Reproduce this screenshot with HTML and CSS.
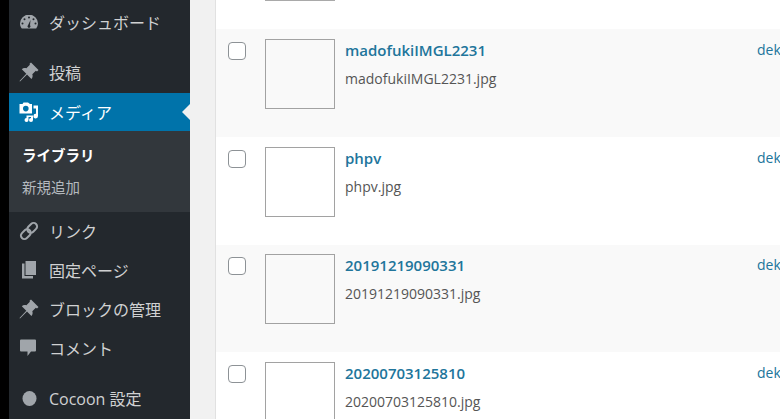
FILE: index.html
```html
<!DOCTYPE html>
<html lang="ja">
<head>
  <meta charset="UTF-8">
  <title>メディアライブラリ</title>
  <link rel="stylesheet" href="styles.css">
</head>
<body>
  <div class="pagina">
    <nav class="menu">
      <a class="item primeiro">
        <svg class="icone" viewBox="0 0 20 20"><path fill-rule="evenodd" d="M10 2.500a9 9 0 0 0-9 9c0 2 .7 3.700 1.800 5h14.400a8.900 8.900 0 0 0 1.800-5 9 9 0 0 0-9-9zM10 4.500a1 1 0 1 1 0 2 1 1 0 0 1 0-2zM5.500 6.200a1 1 0 1 1 0 2 1 1 0 0 1 0-2zM14.500 6.200a1 1 0 1 1 0 2 1 1 0 0 1 0-2zM3.500 10.500a1 1 0 1 1 0 2 1 1 0 0 1 0-2zM16.500 10.500a1 1 0 1 1 0 2 1 1 0 0 1 0-2zM11.500 8l-.5 5.200a1.500 1.500 0 1 1-2 0z"/></svg>
        ダッシュボード
      </a>
      <a class="item depois-separador">
        <svg class="icone" viewBox="0 0 20 20"><path d="M12 .5l7.500 7.500-1.500 1.500-1.200-.7-3.500 3.500c.7 1.800.3 3.400-.9 4.600L8 12.500 1 19.500l-.5-.5L7.300 11.700 2.800 7.200C4 6 5.600 5.600 7.400 6.300l3.500-3.500-.4-1z"/></svg>
        投稿
      </a>
      <a class="item ativo">
        <svg class="icone" viewBox="0 0 20 20"><path fill-rule="evenodd" d="M.5 2h3l1-1.500h4.500L11 2h2v9.500H.5zM6.800 3.800a2.800 2.800 0 1 0 0 5.600 2.800 2.800 0 0 0 0-5.600z"/><path d="M14.500 3.500h4.500v10.500a2.300 2.300 0 1 1-2-2.200V6.500h-2.500zM7.500 13.500H14v4.500a2 2 0 1 1-2-2v-1H9.500v3a2 2 0 1 1-2-2z"/></svg>
        メディア
      </a>
      <div class="submenu">
        <a class="subitem atual">ライブラリ</a>
        <a class="subitem">新規追加</a>
      </div>
      <a class="item">
        <svg class="icone" viewBox="0 0 20 20"><g class="traco" transform="rotate(-45 10 10)"><rect x="0" y="6.500" width="11" height="7" rx="3.500"/><rect x="9" y="6.500" width="11" height="7" rx="3.500"/></g></svg>
        リンク
      </a>
      <a class="item">
        <svg class="icone" viewBox="0 0 20 20"><path d="M6.500 1H17v14H6.500z"/><path d="M3 3.500h2.500V16H14v2.500H3z"/></svg>
        固定ページ
      </a>
      <a class="item">
        <svg class="icone" viewBox="0 0 20 20"><path d="M12 .5l7.500 7.500-1.500 1.500-1.200-.7-3.500 3.500c.7 1.800.3 3.400-.9 4.600L8 12.500 1 19.500l-.5-.5L7.300 11.700 2.800 7.200C4 6 5.600 5.600 7.400 6.300l3.500-3.500-.4-1z"/></svg>
        ブロックの管理
      </a>
      <a class="item">
        <svg class="icone" viewBox="0 0 20 20"><path d="M2 1.500h14a1 1 0 0 1 1 1v10a1 1 0 0 1-1 1h-4l-3.500 4.500v-4.500H2a1 1 0 0 1-1-1v-10a1 1 0 0 1 1-1z"/></svg>
        コメント
      </a>
      <a class="item depois-separador">
        <svg class="icone" viewBox="0 0 20 20"><ellipse cx="10.500" cy="10.500" rx="7" ry="7.500"/></svg>
        Cocoon 設定
      </a>
    </nav>

    <main class="lista">
      <div class="linha-topo"><div class="miniatura-topo"></div></div>

      <div class="linha alt">
        <span class="caixa"></span>
        <div class="miniatura"></div>
        <div class="info">
          <a class="titulo">madofukiIMGL2231</a>
          <p class="arquivo">madofukiIMGL2231.jpg</p>
        </div>
        <a class="autor">dek</a>
      </div>
      <div class="linha">
        <span class="caixa"></span>
        <div class="miniatura"></div>
        <div class="info">
          <a class="titulo">phpv</a>
          <p class="arquivo">phpv.jpg</p>
        </div>
        <a class="autor">dek</a>
      </div>
      <div class="linha alt">
        <span class="caixa"></span>
        <div class="miniatura"></div>
        <div class="info">
          <a class="titulo">20191219090331</a>
          <p class="arquivo">20191219090331.jpg</p>
        </div>
        <a class="autor">dek</a>
      </div>
      <div class="linha">
        <span class="caixa"></span>
        <div class="miniatura"></div>
        <div class="info">
          <a class="titulo">20200703125810</a>
          <p class="arquivo">20200703125810.jpg</p>
        </div>
        <a class="autor">dek</a>
      </div>
    </main>
  </div>
</body>
</html>
```

FILE: styles.css
```css
html, body { margin: 0; padding: 0; height: 419px; overflow: hidden; background: #f1f1f1; }
body { font-family: "Open Sans", "Noto Sans CJK JP", sans-serif; }
.pagina { display: flex; height: 419px; overflow: hidden; }

.menu { width: 190px; flex: none; background: #23282d; border-left: 9px solid #000; display: flex; flex-direction: column; padding-top: 3px; box-sizing: border-box; }
.item { position: relative; height: 39px; flex: none; display: flex; align-items: center; padding-left: 10px; padding-bottom: 2px; box-sizing: border-box; gap: 10px; font-size: 16px; color: #d0d1d2; white-space: nowrap; }
.depois-separador { margin-top: 11px; }
.icone { width: 20px; height: 20px; fill: #a0a5aa; flex: none; }
.traco { fill: none; stroke: #a0a5aa; stroke-width: 2; }
.ativo { height: 38px; margin-top: 1px; padding-bottom: 0; background: #0073aa; color: #fff; }
.ativo .icone { fill: #fff; }
.ativo::after { content: ""; position: absolute; right: 0; top: 11px; border: 8px solid transparent; border-left: 0; border-right-color: #f1f1f1; }

.submenu { height: 81px; flex: none; background: #32373c; padding-top: 7px; box-sizing: border-box; }
.subitem { display: flex; align-items: center; height: 32px; padding-left: 13px; font-size: 14.500px; color: #b4b9be; }
.atual { color: #fff; font-weight: 700; }

.lista { flex: 1; margin-left: 25px; background: #fff; border-left: 1px solid #e1e1e1; overflow: hidden; }
.linha-topo { height: 29.300px; padding-left: 49px; box-sizing: border-box; }
.miniatura-topo { width: 70px; height: 1px; background: #a9a9a9; }
.linha { display: flex; align-items: flex-start; height: 107.670px; padding-top: 9.700px; box-sizing: border-box; background: #fff; }
.alt { background: #f9f9f9; }
.caixa { width: 18px; height: 18px; flex: none; box-sizing: border-box; margin: 3px 19px 0 12px; background: #fff; border: 1px solid #8d9296; border-radius: 4px; }
.miniatura { width: 70px; height: 70px; flex: none; box-sizing: border-box; border: 1px solid #a2a2a2; }
.info { width: 412px; flex: none; padding-left: 10px; box-sizing: border-box; }
.titulo { display: block; font-size: 15px; font-weight: 600; line-height: 24px; margin-top: -1px; color: #21759b; }
.arquivo { margin: 5px 0 0; font-size: 14px; line-height: 24px; color: #555; }
.autor { font-size: 14px; line-height: 24px; margin-top: -1px; margin-left: 10px; color: #21759b; }
```
